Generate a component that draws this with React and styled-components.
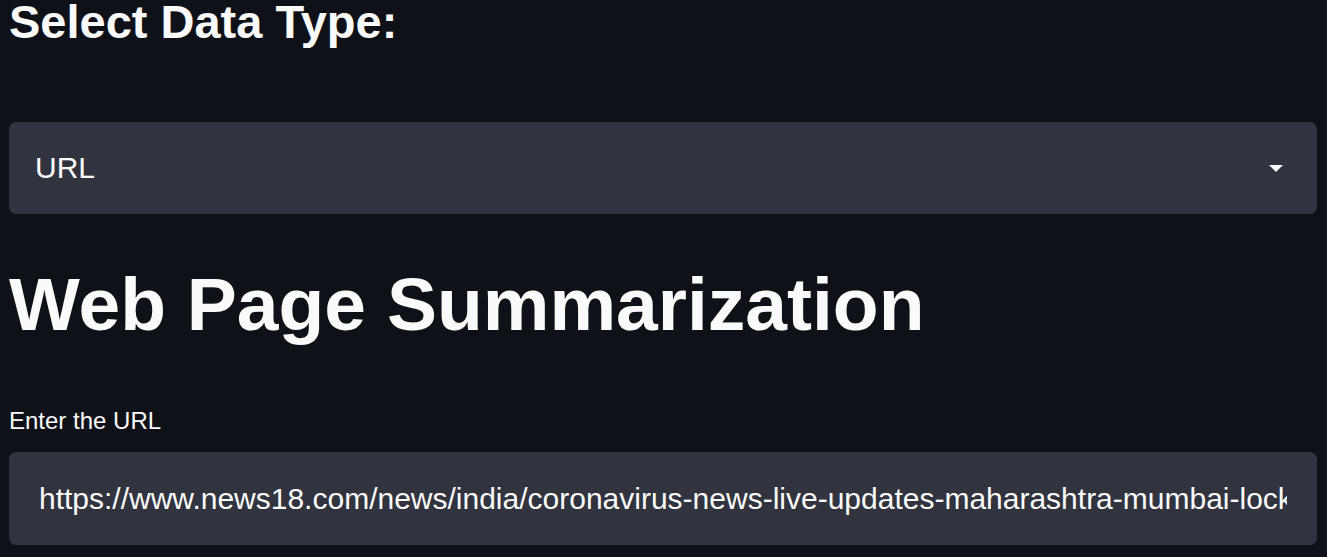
import styled, { createGlobalStyle } from 'styled-components';

const GlobalStyle = createGlobalStyle`
  html, body {
    margin: 0;
    padding: 0;
    background-color: #0e1117;
    color: #fafafa;
    font-family: 'Liberation Sans', Arial, sans-serif;
  }
  * {
    box-sizing: border-box;
  }
`;

const Page = styled.main`
  display: flex;
  flex-direction: column;
  padding: 0 10px 0 9px;
  min-height: 557px;
`;

const SectionTitle = styled.h3`
  margin: 0;
  font-size: 47px;
  line-height: 44px;
  font-weight: 700;
`;

const PageTitle = styled.h1`
  margin: 45px 0 0;
  font-size: 75px;
  line-height: 90px;
  font-weight: 700;
`;

const Field = styled.div`
  display: flex;
  align-items: center;
  height: ${(props) => props.height}px;
  margin-top: ${(props) => props.gap}px;
  padding: 0 ${(props) => props.padRight}px 0 ${(props) => props.padLeft}px;
  background-color: #31333f;
  border-radius: 7px;
  font-size: 30px;
`;

const SelectValue = styled.span`
  flex: 1;
`;

const Caret = styled.span`
  width: 0;
  height: 0;
  border-left: 7px solid transparent;
  border-right: 7px solid transparent;
  border-top: 7px solid #fafafa;
`;

const Label = styled.label`
  margin-top: 58px;
  font-size: 24px;
  line-height: 28px;
`;

const TextInput = styled.input`
  flex: 1;
  min-width: 0;
  border: none;
  outline: none;
  padding: 0;
  background: transparent;
  color: #fafafa;
  font-family: inherit;
  font-size: 30px;
`;

function App() {
  return (
    <>
      <GlobalStyle />
      <Page>
        <SectionTitle>Select Data Type:</SectionTitle>
        <Field height={92} gap={78} padLeft={26} padRight={34}>
          <SelectValue>URL</SelectValue>
          <Caret />
        </Field>
        <PageTitle>Web Page Summarization</PageTitle>
        <Label htmlFor='url'>Enter the URL</Label>
        <Field height={93} gap={17} padLeft={30} padRight={30}>
          <TextInput
            id='url'
            readOnly
            value='https://www.news18.com/news/india/coronavirus-news-live-updates-maharashtra-mumbai-lockdown-latest-news'
          />
        </Field>
      </Page>
    </>
  );
}

export default App;
